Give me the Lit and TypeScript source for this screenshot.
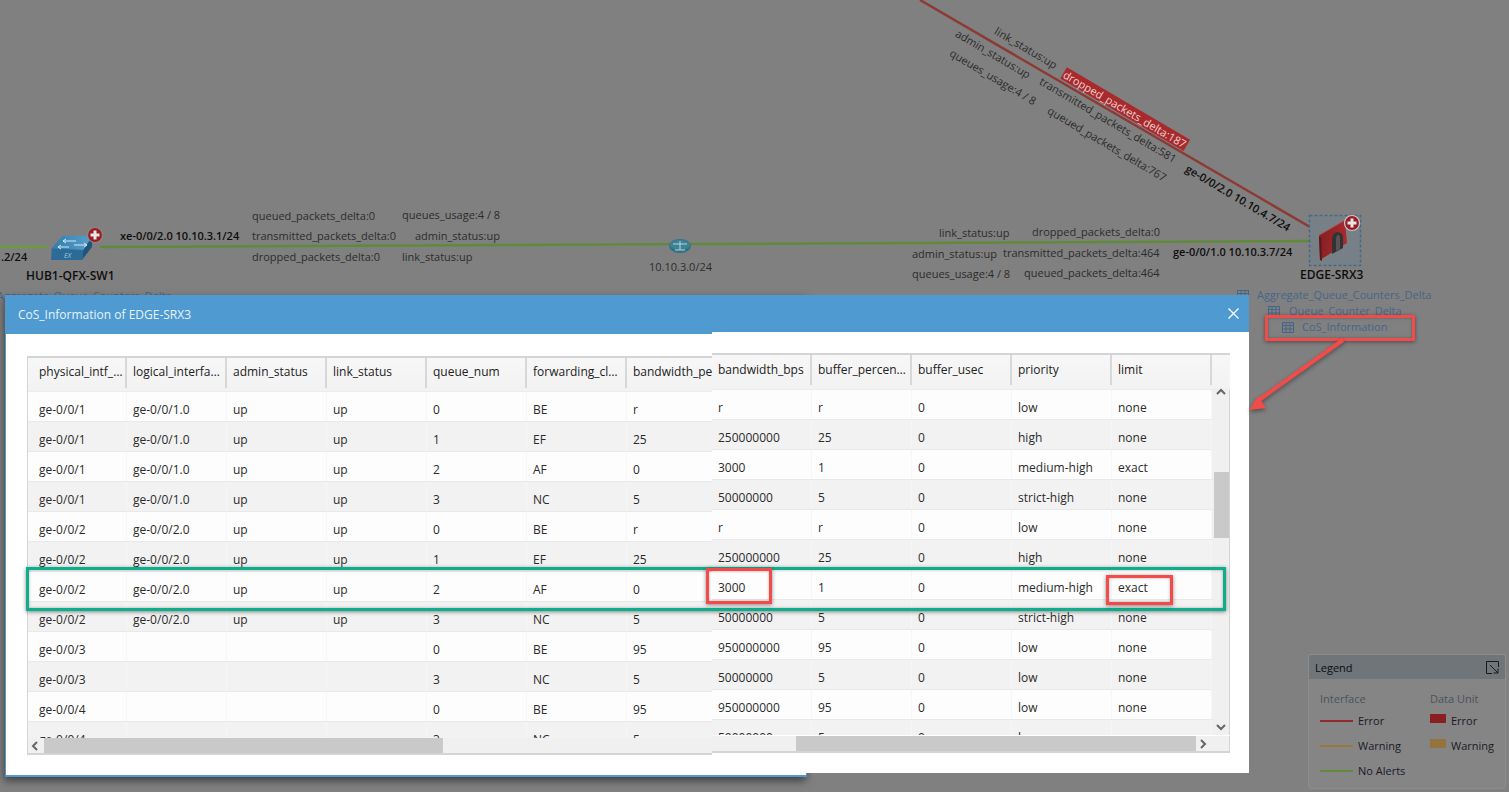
import { LitElement, html, css, svg } from "lit";
import { customElement, property } from "lit/decorators.js";

type Row = string[];

const rowsData: Row[] = [
  ["ge-0/0/1", "ge-0/0/1.0", "up", "up", "0", "BE", "r", "r", "r", "0", "low", "none"],
  ["ge-0/0/1", "ge-0/0/1.0", "up", "up", "1", "EF", "25", "250000000", "25", "0", "high", "none"],
  ["ge-0/0/1", "ge-0/0/1.0", "up", "up", "2", "AF", "0", "3000", "1", "0", "medium-high", "exact"],
  ["ge-0/0/1", "ge-0/0/1.0", "up", "up", "3", "NC", "5", "50000000", "5", "0", "strict-high", "none"],
  ["ge-0/0/2", "ge-0/0/2.0", "up", "up", "0", "BE", "r", "r", "r", "0", "low", "none"],
  ["ge-0/0/2", "ge-0/0/2.0", "up", "up", "1", "EF", "25", "250000000", "25", "0", "high", "none"],
  ["ge-0/0/2", "ge-0/0/2.0", "up", "up", "2", "AF", "0", "3000", "1", "0", "medium-high", "exact"],
  ["ge-0/0/2", "ge-0/0/2.0", "up", "up", "3", "NC", "5", "50000000", "5", "0", "strict-high", "none"],
  ["ge-0/0/3", "", "", "", "0", "BE", "95", "950000000", "95", "0", "low", "none"],
  ["ge-0/0/3", "", "", "", "3", "NC", "5", "50000000", "5", "0", "low", "none"],
  ["ge-0/0/4", "", "", "", "0", "BE", "95", "950000000", "95", "0", "low", "none"],
  ["ge-0/0/4", "", "", "", "3", "NC", "5", "50000000", "5", "0", "low", "none"],
];

const headers = [
  "physical_intf_name", "logical_interface_name", "admin_status", "link_status", "queue_num", "forwarding_class",
  "bandwidth_percent", "bandwidth_bps", "buffer_percentage", "buffer_usec", "priority", "limit",
];

const chev = (dir: "l" | "r" | "u" | "d") => {
  const pts = { l: "6,1 2,5 6,9", r: "2,1 6,5 2,9", u: "1,6 5,2 9,6", d: "1,2 5,6 9,2" }[dir];
  return html`<svg class="chev" width="10" height="10" viewBox="0 0 10 10"><polyline points=${pts}></polyline></svg>`;
};

@customElement("cos-grid")
class CosGrid extends LitElement {
  @property({ type: Number }) from = 0;
  @property({ type: Number }) to = 7;
  @property({ type: Boolean, reflect: true }) right = false;

  static styles = css`
    :host { display: flex; flex-direction: column; flex: 1; min-height: 0; font: 12px "Open Sans", sans-serif; color: #2b2b2b; }
    .head { display: flex; flex: none; height: 36px; background: linear-gradient(#f7f7f7, #f2f2f2); border-top: 2px solid #d4d4d4; border-bottom: 1px solid #ececec; box-sizing: border-box; overflow: hidden; }
    :host([right]) .head { height: 37px; }
    :host(:not([right])) { border-left: 1px solid #d4d4d4; }
    .hc { flex: none; width: 100px; box-sizing: border-box; padding: 0 2px 0 6px; line-height: 30px; height: 30px; border-right: 2px solid #d8d8d8; white-space: nowrap; overflow: hidden; text-overflow: ellipsis; color: #222; }
    :host(:not([right])) .hc { line-height: 28px; }
    .hc.first { padding-left: 11px; }
    :host(:not([right])) .hc:first-child { width: 99px; }
    :host(:not([right])) .hc:last-child { overflow: visible; }
    .hfill { flex: 1; }
    .main { flex: 1; min-height: 0; display: flex; }
    .view { flex: 1; min-width: 0; overflow: hidden; }
    .row { display: flex; height: 30px; box-sizing: border-box; border-bottom: 1px solid #e9e9e9; background: #fdfdfd; }
    .row.alt { background: #f2f2f2; }
    .c { flex: none; width: 100px; box-sizing: border-box; padding: 4px 4px 0 6px; line-height: 27px; white-space: nowrap; overflow: hidden; border-right: 1px solid #f6f6f6; }
    .c.first { padding-left: 11px; }
    :host(:not([right])) .c:first-child { width: 99px; }
    .vbar { flex: none; width: 16px; background: #f0f0f0; display: flex; flex-direction: column; align-items: center; border-right: 1px solid #d4d4d4; padding-left: 1px; }
    .vthumb { width: 15px; height: 66px; margin-top: 74px; background: #c9c9c9; }
    .vbar .chev:first-child { margin-top: -2px; }
    .vbar .chev:last-child { margin-top: auto; margin-bottom: 2px; }
    .hbar { flex: none; height: 17px; display: flex; align-items: center; background: #f0f0f0; border-bottom: 2px solid #d4d4d4; box-sizing: border-box; }
    :host([right]) .hbar { height: 18px; border-top: 1px solid #fff; }
    .cb { flex: none; width: 16px; display: flex; justify-content: center; }
    .hthumb { flex: none; height: 15px; background: #c9c9c9; }
    .corner { flex: none; width: 17px; align-self: stretch; background: #f0f0f0; border-right: 1px solid #d4d4d4; }
    .chev { flex: none; }
    .chev polyline { fill: none; stroke: #666; stroke-width: 2; }
  `;

  render() {
    const hs = headers.slice(this.from, this.to);
    return html`
      <div class="head">
        ${hs.map((h, i) => html`<div class="hc ${i === 0 && !this.right ? "first" : ""}">${h}</div>`)}
        ${this.right ? html`<div class="hfill"></div>` : ""}
      </div>
      <div class="main">
        <div class="view">
          ${rowsData.map((r, ri) => html`<div class="row ${ri % 2 ? "alt" : ""}">
            ${r.slice(this.from, this.to).map((v, i) => html`<div class="c ${i === 0 && !this.right ? "first" : ""}">${v}</div>`)}
          </div>`)}
        </div>
        ${this.right ? html`<div class="vbar">${chev("u")}<div class="vthumb"></div>${chev("d")}</div>` : ""}
      </div>
      <div class="hbar">
        ${this.right
          ? html`<div class="hthumb" style="margin-left:84px;width:400px"></div><div class="cb">${chev("r")}</div><div class="corner"></div>`
          : html`<div class="cb">${chev("l")}</div><div class="hthumb" style="width:399px"></div>`}
      </div>
    `;
  }
}

interface Label { t: string; x: number; y: number; k?: string; }

const flat: Label[] = [
  { t: "queued_packets_delta:0", x: 252, y: 216 },
  { t: "queues_usage:4 / 8", x: 402, y: 215 },
  { t: "transmitted_packets_delta:0", x: 252, y: 236 },
  { t: "admin_status:up", x: 415, y: 236 },
  { t: "dropped_packets_delta:0", x: 252, y: 257 },
  { t: "link_status:up", x: 402, y: 257 },
  { t: "xe-0/0/2.0 10.10.3.1/24", x: 120, y: 236, k: "dark" },
  { t: ".2/24", x: 1, y: 257, k: "dark" },
  { t: "HUB1-QFX-SW1", x: 26, y: 276, k: "name" },
  { t: "Aggregate_Queue_Counters_Delta", x: -3, y: 296, k: "link" },
  { t: "10.10.3.0/24", x: 649, y: 267 },
  { t: "link_status:up", x: 939, y: 233 },
  { t: "dropped_packets_delta:0", x: 1032, y: 232 },
  { t: "admin_status:up", x: 912, y: 254 },
  { t: "transmitted_packets_delta:464", x: 1003, y: 253 },
  { t: "ge-0/0/1.0 10.10.3.7/24", x: 1173, y: 252, k: "dark" },
  { t: "queues_usage:4 / 8", x: 912, y: 274 },
  { t: "queued_packets_delta:464", x: 1024, y: 273 },
  { t: "EDGE-SRX3", x: 1300, y: 275, k: "name" },
  { t: "Aggregate_Queue_Counters_Delta", x: 1257, y: 295, k: "link" },
  { t: "Queue_Counter_Delta", x: 1289, y: 311, k: "link" },
  { t: "CoS_Information", x: 1302, y: 327, k: "link" },
];

const tilted: Label[] = [
  { t: "link_status:up", x: 1026, y: 48 },
  { t: "dropped_packets_delta:187", x: 1125, y: 109, k: "err" },
  { t: "admin_status:up", x: 993, y: 54 },
  { t: "queues_usage:4 / 8", x: 993, y: 77 },
  { t: "transmitted_packets_delta:581", x: 1108, y: 120 },
  { t: "queued_packets_delta:767", x: 1107, y: 144 },
  { t: "ge-0/0/2.0 10.10.4.7/24", x: 1238, y: 198, k: "dark" },
];

const tableIcon = (x: number, y: number) => svg`
  <g transform="translate(${x} ${y})" fill="none" stroke="#46658a" stroke-width="1">
    <rect x="0.5" y="0.5" width="11" height="10"></rect>
    <path d="M0 3.5H12M0 7H12M4 0V11M8 0V11"></path>
  </g>`;

const plusBadge = (cx: number, cy: number, ring: string) => svg`
  <circle cx=${cx} cy=${cy} r="7.5" fill="#9c1c22" stroke=${ring} stroke-width="1.2"></circle>
  <path d="M${cx - 4.5} ${cy}H${cx + 4.5}M${cx} ${cy - 4.5}V${cy + 4.5}" stroke="#e6e6e6" stroke-width="3"></path>`;

@customElement("app-root")
class AppRoot extends LitElement {
  static styles = css`
    :host { display: block; position: relative; width: 1509px; height: 792px; overflow: hidden; background: #808080; font: 11px "Open Sans", sans-serif; color: #262626; }
    .canvas { position: absolute; inset: 0; }
    .canvas svg { position: absolute; inset: 0; }
    .lb { position: absolute; white-space: nowrap; transform: translateY(-50%); color: #2c2c2c; line-height: 16px; }
    .lb.dark { color: #0e0e0e; font-weight: 600; }
    .lb.name { color: #0e0e0e; font-weight: 600; font-size: 12px; }
    .lb.link { color: #46658a; }
    .tl { position: absolute; white-space: nowrap; line-height: 14px; color: #2c2c2c; transform: translate(-50%, -50%) rotate(30.5deg); }
    .tl.dark { color: #0e0e0e; font-weight: 600; }
    .tl.err { background: #a92a2c; color: #e9cfcf; padding: 0 1px; line-height: 13px; }

    .modal { position: absolute; display: flex; flex-direction: column; box-sizing: border-box; background: #fff; font: 12px "Open Sans", sans-serif; }
    .modal.l { left: 5px; top: 295px; width: 802px; height: 482px; border: solid #4f9bd1; border-width: 0 1px 2px; box-shadow: -1px 4px 8px rgba(0,0,0,.5); }
    .modal.r { left: 712px; top: 295px; width: 537px; height: 478px; }
    .mh { flex: none; display: flex; align-items: center; justify-content: space-between; background: #4f9bd1; color: #e8f2f9; padding: 0 10px 0 12px; box-sizing: border-box; }
    .l .mh { height: 39px; }
    .r .mh { height: 37px; }
    .close { stroke: #fff; stroke-width: 1.3; fill: none; }
    .mb { flex: 1; min-height: 0; display: flex; flex-direction: column; }
    .l .mb { padding: 22px 0 20px 21px; overflow: hidden; }
    .r .mb { padding: 21px 19px 20px 0; }

    .legend { position: absolute; left: 1308px; top: 654px; width: 198px; height: 135px; box-sizing: border-box; border: 1px solid #8c8c8c; border-radius: 3px; background: #858585; color: #1a1a26; display: flex; flex-direction: column; font: 11px "Open Sans", sans-serif; }
    .lh { flex: none; height: 24px; background: #6f7578; display: flex; align-items: center; justify-content: space-between; padding: 0 6px; border-radius: 3px 3px 0 0; color: #0c0c14; }
    .lh svg { fill: none; stroke: #1a1a1a; stroke-width: 1; }
    .lcols { flex: 1; display: flex; padding: 10px 0 0 11px; }
    .lcol { display: flex; flex-direction: column; }
    .lcol.a { width: 110px; }
    .lt { color: #4c525a; line-height: 20px; height: 19px; }
    .li { display: flex; align-items: center; gap: 5px; height: 25px; }
    .ln { width: 33px; height: 2px; flex: none; }
    .sw { width: 16px; height: 9px; flex: none; margin-top: -4px; }

    .mark { position: absolute; box-sizing: border-box; border: 3px solid #f34a4a; box-shadow: 0 1px 4px rgba(0,0,0,.45), inset 0 0 3px rgba(0,0,0,.3); }
    .mark.g { left: 26px; top: 567px; width: 1200px; height: 44px; border-color: #0cae8c; }
    .mark.a { left: 1265px; top: 315px; width: 150px; height: 26px; }
    .mark.b { left: 706px; top: 568px; width: 66px; height: 36px; }
    .mark.c { left: 1106px; top: 575px; width: 67px; height: 30px; }
    .arrow { position: absolute; left: 1240px; top: 335px; filter: drop-shadow(0 2px 2px rgba(0,0,0,.4)); }
  `;

  render() {
    return html`
      <div class="canvas">
        <svg width="1509" height="792">
          <defs>
            <linearGradient id="brick" x1="0" x2="1" y1="0" y2="0.3"><stop offset="0" stop-color="#7c1e22"></stop><stop offset="1" stop-color="#ab2a2e"></stop></linearGradient>
            <linearGradient id="sw" x1="0" x2="1"><stop offset="0" stop-color="#2f7fb0"></stop><stop offset="1" stop-color="#5aa0cc"></stop></linearGradient>
          </defs>
          <line x1="920" y1="0" x2="1310" y2="227" stroke="#8c3a34" stroke-width="2.5"></line>
          <line x1="0" y1="247" x2="47" y2="247" stroke="#6b9a3a" stroke-width="2.5"></line>
          <line x1="100" y1="247" x2="1310" y2="241" stroke="#5f8a3a" stroke-width="2.5"></line>

          <rect x="1309.5" y="215.5" width="51" height="50" fill="#788087" stroke="#3f6a88" stroke-width="1.5" stroke-dasharray="3 2"></rect>
          <polygon points="1319,235 1345,220 1347,226 1322,241" fill="#b23a3c"></polygon>
          <polygon points="1319,236 1345,221 1347,243 1320,260" fill="url(#brick)"></polygon>
          <polygon points="1319,236 1321,238 1322,261 1320,260" fill="#5e1719"></polygon>
          <path d="M1332 254V240Q1332 233 1337 232Q1343 232 1343 238V248Z" fill="#333"></path>
          <path d="M1336 251V240Q1336 235 1338.5 235Q1340 235 1340 239V249Z" fill="#555"></path>
          ${plusBadge(1352, 223, "#c9c9c9")}

          <polygon points="62.7,235.7 92.7,235.7 83.3,250 51.7,248.3" fill="url(#sw)"></polygon>
          <polygon points="51.7,248.3 83.3,250 82,260 51,260" fill="#2a6c97"></polygon>
          <polygon points="83.3,250 92.7,235.7 92,247 82,260" fill="#1f577c"></polygon>
          <path d="M63 241H76M66 239L63 241L66 243M58 247H69M61 245L58 247L61 249M74 245H87M84 243L87 245L84 247" stroke="#d8e8f2" stroke-width="1" fill="none"></path>
          <text x="64" y="258" font-size="7" font-style="italic" fill="#9cc4dc" font-family="Open Sans">EX</text>
          ${plusBadge(95, 235, "#8a8a8a")}

          <ellipse cx="680" cy="246" rx="11" ry="7" fill="#2f7184"></ellipse>
          <ellipse cx="680" cy="245" rx="10" ry="5" fill="#3d8296"></ellipse>
          <path d="M673 244H687M680 241V250M675 250H685" stroke="#bcd3da" stroke-width="1" fill="none"></path>

          ${tableIcon(1237, 290)} ${tableIcon(1268, 306)} ${tableIcon(1282, 322)}
        </svg>
        ${flat.map((l) => html`<div class="lb ${l.k ?? ""}" style="left:${l.x}px;top:${l.y}px">${l.t}</div>`)}
        ${tilted.map((l) => html`<div class="tl ${l.k ?? ""}" style="left:${l.x}px;top:${l.y}px">${l.t}</div>`)}
      </div>

      <div class="legend">
        <div class="lh">
          <span>Legend</span>
          <svg width="13" height="13" viewBox="0 0 13 13"><path d="M12.5 6V.5H.5V12.5H6M4 4L12 12M12 7.5V12H7.5"></path></svg>
        </div>
        <div class="lcols">
          <div class="lcol a">
            <div class="lt">Interface</div>
            <div class="li"><span class="ln" style="background:#8f2a2e"></span>Error</div>
            <div class="li"><span class="ln" style="background:#98763c"></span>Warning</div>
            <div class="li"><span class="ln" style="background:#5f8a3a"></span>No Alerts</div>
          </div>
          <div class="lcol">
            <div class="lt">Data Unit</div>
            <div class="li"><span class="sw" style="background:#8a1f22"></span>Error</div>
            <div class="li"><span class="sw" style="background:#94733c"></span>Warning</div>
          </div>
        </div>
      </div>

      <div class="modal l">
        <div class="mh"><span>CoS_Information of EDGE-SRX3</span></div>
        <div class="mb"><cos-grid .from=${0} .to=${7}></cos-grid></div>
      </div>
      <div class="modal r">
        <div class="mh"><span></span>
          <svg class="close" width="11" height="11" viewBox="0 0 11 11"><path d="M.5 .5L10.5 10.5M10.5 .5L.5 10.5"></path></svg>
        </div>
        <div class="mb"><cos-grid right .from=${7} .to=${12}></cos-grid></div>
      </div>

      <div class="mark g"></div>
      <div class="mark a"></div>
      <div class="mark b"></div>
      <div class="mark c"></div>
      <svg class="arrow" width="110" height="85" viewBox="0 0 110 85">
        <path d="M103 5L19 65" stroke="#f34a4a" stroke-width="4" fill="none"></path>
        <polygon points="9,75 18,61 26,73" fill="#f34a4a"></polygon>
      </svg>
    `;
  }
}
